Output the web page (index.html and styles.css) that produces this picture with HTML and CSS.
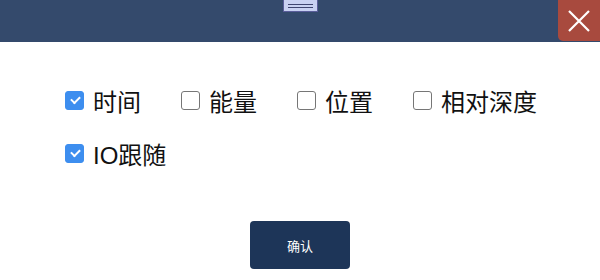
FILE: index.html
```html
<!DOCTYPE html>
<html lang="zh-CN">
<head>
    <meta charset="UTF-8">
    <title>显示设置</title>
    <link rel="stylesheet" href="styles.css">
</head>
<body>
<div class="dialog">
    <div class="header">
        <span class="handle"></span>
        <button class="close">
            <svg width="24" height="24" viewBox="0 0 24 24">
                <path d="M2 2 L22 22 M22 2 L2 22" stroke="#fff" stroke-width="2.2" fill="none"/>
            </svg>
        </button>
    </div>
    <div class="body">
        <ul class="options">
            <li class="option"><span class="box checked"></span>时间</li>
            <li class="option"><span class="box"></span>能量</li>
            <li class="option"><span class="box"></span>位置</li>
            <li class="option"><span class="box"></span>相对深度</li>
            <li class="option"><span class="box checked"></span>IO跟随</li>
        </ul>
    </div>
    <div class="footer">
        <button class="confirm">确认</button>
    </div>
</div>
</body>
</html>
```

FILE: styles.css
```css
* {
    padding: 0;
    margin: 0;
    box-sizing: border-box;
}

ul {
    list-style: none;
}

body {
    width: 600px;
    height: 280px;
    background-color: #fff;
    font-family: "Liberation Sans", "Noto Sans CJK SC", sans-serif;
    overflow: hidden;
}

.dialog {
    width: 600px;
    height: 280px;
    display: flex;
    flex-direction: column;
}

.header {
    height: 42px;
    background-color: #344a6c;
    position: relative;
    display: flex;
    justify-content: center;
}

.handle {
    width: 35px;
    height: 12px;
    background-color: #c9d1f2;
    border: 1px solid #5a5e9a;
    border-top: 0;
    position: relative;
}

.handle::before,
.handle::after {
    content: "";
    position: absolute;
    left: 4px;
    right: 4px;
    height: 1px;
    background-color: #3f4570;
}

.handle::before {
    top: 4px;
}

.handle::after {
    top: 7px;
}

.close {
    position: absolute;
    top: 0;
    right: 0;
    width: 42px;
    height: 41px;
    border: 0;
    border-bottom-left-radius: 5px;
    background-color: #a84a3e;
    display: flex;
    align-items: center;
    justify-content: center;
    cursor: pointer;
}

.body {
    padding: 40px 0 0 65px;
    height: 179px;
}

.options {
    display: flex;
    flex-wrap: wrap;
    row-gap: 17px;
    width: 500px;
}

.option {
    width: 116px;
    height: 36px;
    display: flex;
    align-items: center;
    font-size: 24px;
    color: #111;
    white-space: nowrap;
}

.option:nth-child(4) {
    width: 130px;
}

.box {
    width: 19px;
    height: 19px;
    border: 1px solid #767676;
    border-radius: 3px;
    margin-right: 9px;
    flex-shrink: 0;
    position: relative;
}

.box.checked {
    background-color: #3d8eef;
    border-color: #3d8eef;
}

.box.checked::after {
    content: "";
    position: absolute;
    left: 5px;
    top: 4px;
    width: 7px;
    height: 4px;
    border-left: 2px solid #fff;
    border-bottom: 2px solid #fff;
    transform: rotate(-45deg);
}

.footer {
    display: flex;
    justify-content: center;
}

.confirm {
    width: 100px;
    height: 48px;
    border: 0;
    border-radius: 4px;
    background-color: #1d3558;
    color: #fff;
    font-size: 13px;
    font-family: "Noto Sans CJK SC", sans-serif;
    cursor: pointer;
}
```
